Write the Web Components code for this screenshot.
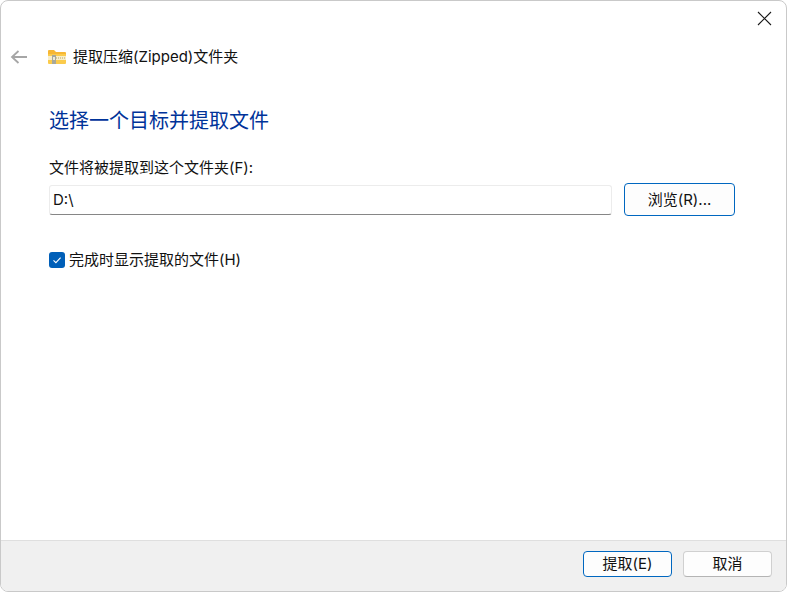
<!DOCTYPE html>
<html lang="zh">
<head>
<meta charset="utf-8">
<title>提取压缩(Zipped)文件夹</title>
<style>
html, body { margin: 0; height: 100%; background: #fff; }
body { font: 15px Inter, "Noto Sans CJK SC", sans-serif; color: #111; }
</style>
</head>
<body>
<wizard-window>
  <span slot="title">提取压缩(Zipped)文件夹</span>
  <h-line slot="heading">选择一个目标并提取文件</h-line>
  <path-field label="文件将被提取到这个文件夹(F):" value="D:\">
    <win-button wide focused>浏览(R)...</win-button>
  </path-field>
  <check-row checked>完成时显示提取的文件(H)</check-row>
  <win-button slot="footer" focused>提取(E)</win-button>
  <win-button slot="footer">取消</win-button>
</wizard-window>

<template id="window-tpl">
<style>
:host {
  display: flex;
  flex-direction: column;
  box-sizing: border-box;
  height: 592px;
  border: 1px solid #c9c9c9;
  border-radius: 8px;
  overflow: hidden;
  background: #fff;
}
.close {
  display: flex;
  justify-content: flex-end;
  height: 35px;
  padding: 10px 14px 0 0;
  box-sizing: border-box;
}
.nav {
  display: flex;
  align-items: center;
  height: 42px;
  padding-left: 9px;
}
.folder { margin-left: 20px; margin-right: 7px; }
.title { line-height: 20px; }
.body {
  flex: 1;
  display: flex;
  flex-direction: column;
  padding: 29px 51px 0 48px;
}
footer {
  display: flex;
  justify-content: flex-end;
  gap: 11px;
  height: 51px;
  box-sizing: border-box;
  padding: 10px 14px 0 0;
  background: #f0f0f0;
  border-top: 1px solid #dfdfdf;
}
</style>
<div class="close">
  <svg width="15" height="15" viewBox="0 0 15 15"><path d="M1 1 14 14M14 1 1 14" stroke="#1a1a1a" stroke-width="1.1" fill="none"/></svg>
</div>
<div class="nav">
  <svg width="18" height="14" viewBox="0 0 18 14"><path d="M8.5 1 2 7l6.5 6M2 7h15" stroke="#a6a6a6" stroke-width="1.8" fill="none"/></svg>
  <svg class="folder" width="18" height="16" viewBox="0 0 18 16">
    <path d="M0 2Q0 1 1 1H6l2 2h9Q18 3 18 4V6H0Z" fill="#f7b733"/>
    <rect x="0" y="5" width="18" height="10" rx="1" fill="#fbcb4c"/>
    <rect x="0" y="7" width="18" height="4" fill="#f8eec8"/>
    <path d="M8 9h10" stroke="#b5a468" stroke-width="1.2" stroke-dasharray="1 1"/>
    <rect x="4" y="6" width="4" height="9" fill="#a8a89a"/>
    <rect x="5" y="8" width="2" height="3" fill="#ecebdc"/>
  </svg>
  <span class="title"><slot name="title"></slot></span>
</div>
<div class="body">
  <slot name="heading"></slot>
  <slot></slot>
</div>
<footer><slot name="footer"></slot></footer>
</template>

<template id="heading-tpl">
<style>
:host { display: block; font-size: 20px; line-height: 28px; color: #003399; margin-bottom: 23px; }
</style>
<slot></slot>
</template>

<template id="field-tpl">
<style>
:host { display: block; }
label { display: block; line-height: 20px; margin-bottom: 5px; }
.row { display: flex; align-items: center; gap: 12px; }
.input {
  flex: 1;
  box-sizing: border-box;
  height: 30px;
  padding: 0 3px;
  line-height: 27px;
  background: #fff;
  border: 1px solid #ececec;
  border-bottom: 1px solid #868686;
  border-radius: 3px;
}
</style>
<label></label>
<div class="row">
  <div class="input"></div>
  <slot></slot>
</div>
</template>

<template id="check-tpl">
<style>
:host { display: flex; align-items: center; gap: 4px; margin-top: 34px; line-height: 20px; }
.box {
  display: flex; align-items: center; justify-content: center;
  width: 16px; height: 16px; border-radius: 3px; background: #005fb8;
}
</style>
<span class="box">
  <svg width="12" height="12" viewBox="0 0 12 12"><path d="M2.5 6.4 4.9 8.7 9.6 3.6" stroke="#fff" stroke-width="1.1" fill="none"/></svg>
</span>
<slot></slot>
</template>

<template id="button-tpl">
<style>
:host {
  display: inline-flex;
  align-items: center;
  justify-content: center;
  box-sizing: border-box;
  width: 89px;
  height: 26px;
  background: #fdfdfd;
  border: 1px solid #d0d0d0;
  border-bottom-color: #b4b4b4;
  border-radius: 4px;
  line-height: 20px;
}
:host([focused]) { border-color: #0067c0; }
:host([wide]) { width: 111px; height: 33px; }
</style>
<slot></slot>
</template>

<script>
function shadowFrom(el, id) {
  const shadow = el.attachShadow({mode: "open"});
  shadow.append(document.getElementById(id).content.cloneNode(true));
  return shadow;
}

class WizardWindow extends HTMLElement {
  constructor() {
    super();
    shadowFrom(this, "window-tpl");
  }
}

class HLine extends HTMLElement {
  constructor() {
    super();
    shadowFrom(this, "heading-tpl");
  }
}

class PathField extends HTMLElement {
  constructor() {
    super();
    const shadow = shadowFrom(this, "field-tpl");
    shadow.querySelector("label").textContent = this.getAttribute("label");
    shadow.querySelector(".input").textContent = this.getAttribute("value");
  }
}

class CheckRow extends HTMLElement {
  constructor() {
    super();
    shadowFrom(this, "check-tpl");
  }
}

class WinButton extends HTMLElement {
  constructor() {
    super();
    shadowFrom(this, "button-tpl");
  }
}

customElements.define("wizard-window", WizardWindow);
customElements.define("h-line", HLine);
customElements.define("path-field", PathField);
customElements.define("check-row", CheckRow);
customElements.define("win-button", WinButton);
</script>
</body>
</html>
